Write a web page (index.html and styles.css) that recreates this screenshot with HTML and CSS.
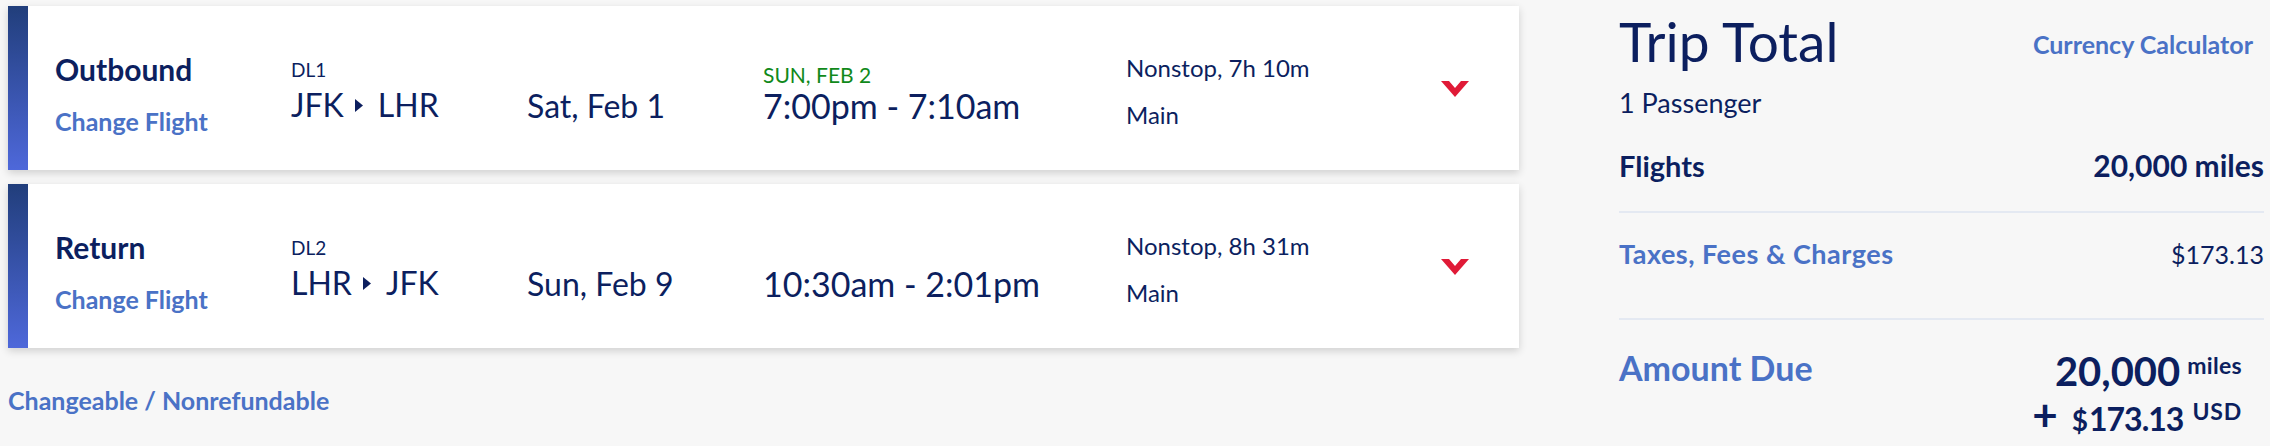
FILE: index.html
```html
<!DOCTYPE html>
<html lang="en">
<head>
<meta charset="utf-8">
<title>Trip Summary</title>
<link rel="stylesheet" href="styles.css">
</head>
<body>
<div class="page">
  <div class="flights">
    <div class="card">
      <div class="bar"></div>
      <div class="col c-dir">
        <div class="dir">Outbound</div>
        <a class="link change">Change Flight</a>
      </div>
      <div class="col c-route">
        <div class="fno">DL1</div>
        <div class="route">JFK<svg class="tri" width="8" height="13" viewBox="0 0 8 13"><polygon points="0,0 8,6.5 0,13" fill="#0c1f5f"/></svg>LHR</div>
      </div>
      <div class="col c-date"><div class="date">Sat, Feb 1</div></div>
      <div class="col c-time">
        <div class="arr">SUN, FEB 2</div>
        <div class="time">7:00pm - 7:10am</div>
      </div>
      <div class="col c-info">
        <div class="info">Nonstop, 7h 10m</div>
        <div class="info cabin">Main</div>
      </div>
      <div class="col c-chev"><svg width="28" height="16" viewBox="0 0 28 16"><polygon points="0,0 8,0 14,6.9 20,0 28,0 14,16" fill="#e01a37"/></svg></div>
    </div>
    <div class="card">
      <div class="bar"></div>
      <div class="col c-dir">
        <div class="dir">Return</div>
        <a class="link change">Change Flight</a>
      </div>
      <div class="col c-route">
        <div class="fno">DL2</div>
        <div class="route">LHR<svg class="tri" width="8" height="13" viewBox="0 0 8 13"><polygon points="0,0 8,6.5 0,13" fill="#0c1f5f"/></svg>JFK</div>
      </div>
      <div class="col c-date"><div class="date">Sun, Feb 9</div></div>
      <div class="col c-time c-time--single">
        <div class="time">10:30am - 2:01pm</div>
      </div>
      <div class="col c-info">
        <div class="info">Nonstop, 8h 31m</div>
        <div class="info cabin">Main</div>
      </div>
      <div class="col c-chev"><svg width="28" height="16" viewBox="0 0 28 16"><polygon points="0,0 8,0 14,6.9 20,0 28,0 14,16" fill="#e01a37"/></svg></div>
    </div>
    <a class="link fare">Changeable / Nonrefundable</a>
  </div>

  <div class="total">
    <div class="t-head">
      <h1 class="t-title">Trip Total</h1>
      <a class="link calc">Currency Calculator</a>
    </div>
    <div class="pax">1 Passenger</div>
    <div class="row r-flights">
      <span>Flights</span>
      <span class="miles-val">20,000 miles</span>
    </div>
    <div class="rule"></div>
    <div class="row r-taxes">
      <a class="link taxes">Taxes, Fees &amp; Charges</a>
      <span class="amt">$173.13</span>
    </div>
    <div class="rule rule2"></div>
    <div class="row r-due">
      <span class="due-label">Amount Due</span>
      <div class="due">
        <div class="due-miles">20,000<span class="sup">miles</span></div>
        <div class="due-cash"><span class="plus">+</span><span class="dollar">$</span><span class="cash">173.13</span><span class="sup sup-usd">USD</span></div>
      </div>
    </div>
  </div>
</div>
</body>
</html>
```

FILE: styles.css
```css
* { box-sizing: border-box; }
html, body { margin: 0; padding: 0; }
body {
  background: #f7f7f7;
  font-family: Lato, "Noto Sans", sans-serif;
  color: #0c1f5f;
  width: 2270px;
  height: 446px;
  overflow: hidden;
}
.page {
  display: flex;
  align-items: flex-start;
}
.link {
  color: #4a72c6;
  font-weight: 700;
  text-decoration: none;
}

/* ---------- flight cards ---------- */
.flights {
  margin-left: 8px;
  padding-top: 6px;
  width: 1511px;
  display: flex;
  flex-direction: column;
  gap: 14px;
}
.card {
  display: flex;
  height: 164px;
  background: #fff;
  box-shadow: 0 3px 8px rgba(0, 0, 0, 0.16);
}
.bar {
  flex: none;
  width: 20px;
  background: linear-gradient(#213e7b, #4e68da);
}
.col { flex: none; }
.c-dir { width: 236px; margin-left: 27px; padding-top: 46px; }
.c-route { width: 236px; padding-top: 53px; }
.c-date { width: 236px; padding-top: 81px; }
.c-time { width: 363px; padding-top: 56px; }
.c-time--single { padding-top: 82px; }
.c-info { width: 315px; padding-top: 47px; }
.c-chev { width: 28px; padding-top: 75px; }
.c-chev svg { display: block; }

.dir {
  font-size: 30px;
  font-weight: 700;
  line-height: 34px;
  margin-bottom: 20px;
}
.change {
  display: block;
  font-size: 25px;
  line-height: 30px;
}
.fno {
  font-size: 19px;
  line-height: 22px;
  margin-bottom: 5px;
}
.route, .date {
  font-size: 32px;
  line-height: 38px;
  white-space: nowrap;
}
.tri {
  margin: 0 15px 0 11px;
  vertical-align: 5px;
}
.arr {
  color: #10891a;
  font-size: 21px;
  line-height: 26px;
}
.time {
  font-size: 34px;
  line-height: 35px;
  white-space: nowrap;
}
.info {
  font-size: 24px;
  line-height: 30px;
  white-space: nowrap;
}
.cabin { margin-top: 17px; }

.fare {
  display: block;
  font-size: 25px;
  line-height: 30px;
  margin-top: 23px;
}

/* ---------- trip total ---------- */
.total {
  margin-left: 100px;
  width: 645px;
  padding-top: 9px;
}
.t-head {
  display: flex;
  justify-content: space-between;
  align-items: flex-start;
}
.t-title {
  margin: 0;
  font-size: 55px;
  font-weight: 400;
  line-height: 64px;
}
.calc {
  font-size: 25px;
  line-height: 30px;
  margin-top: 20px;
  margin-right: 11px;
}
.pax {
  font-size: 27px;
  line-height: 32px;
  margin-top: 14px;
}
.row {
  display: flex;
  justify-content: space-between;
  align-items: flex-start;
}
.r-flights {
  margin-top: 30px;
  font-size: 29px;
  font-weight: 700;
  line-height: 33px;
}
.miles-val { font-size: 30px; }
.rule {
  height: 2px;
  background: #e4e9f2;
  margin-top: 29px;
}
.r-taxes {
  margin-top: 25px;
  font-size: 25px;
  line-height: 32px;
}
.taxes {
  font-size: 27px;
  letter-spacing: 0.5px;
  line-height: 31px;
}
.amt { font-weight: 400; }
.rule2 { margin-top: 48px; }
.r-due { margin-top: 28px; }
.due-label {
  color: #4a72c6;
  font-size: 34px;
  font-weight: 700;
  line-height: 39px;
}
.due {
  text-align: right;
  font-weight: 700;
  margin-right: 22px;
}
.due-miles {
  font-size: 40px;
  line-height: 46px;
}
.due-cash {
  font-size: 33px;
  line-height: 48px;
}
.cash {
  font-size: 32px;
  letter-spacing: -1px;
}
.sup {
  font-size: 23px;
  line-height: 0;
  vertical-align: 12px;
  margin-left: 7px;
  letter-spacing: 0.3px;
}
.sup-usd {
  vertical-align: 11px;
  margin-left: 9px;
  letter-spacing: 0.8px;
}
.plus {
  font-size: 44px;
  line-height: 0;
  margin-right: 14px;
}
.dollar { font-size: 28px; line-height: 0; margin-right: 1px; }
```
